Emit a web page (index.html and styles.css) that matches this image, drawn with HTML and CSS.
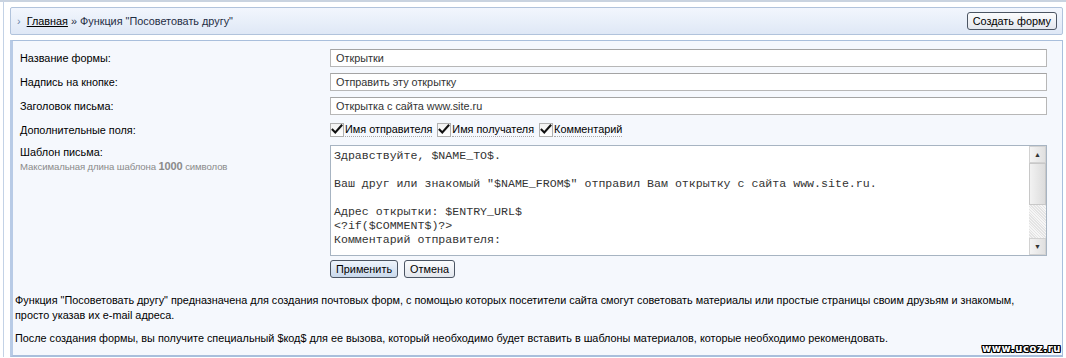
FILE: index.html
```html
<!DOCTYPE html>
<html lang="ru">
<head>
    <meta charset="UTF-8">
    <title>Посоветовать другу</title>
    <link rel="stylesheet" href="styles.css">
</head>
<body>
    <div class="page">
        <div class="crumbs">
            <div class="path">
                <span class="arrow">›</span>
                <a href="#">Главная</a> » Функция "Посоветовать другу"
            </div>
            <button class="btn">Создать форму</button>
        </div>

        <div class="panel">
            <div class="form">
                <div class="label">Название формы:</div>
                <div class="field"><input type="text" value="Открытки"></div>

                <div class="label">Надпись на кнопке:</div>
                <div class="field"><input type="text" value="Отправить эту открытку"></div>

                <div class="label">Заголовок письма:</div>
                <div class="field"><input type="text" value="Открытка с сайта www.site.ru"></div>

                <div class="label">Дополнительные поля:</div>
                <div class="field checks">
                    <label class="check"><span class="box"><svg width="14" height="12" viewBox="0 0 14 12"><path d="M1 6 L5 10 L13 1" fill="none" stroke="#111" stroke-width="2.4"/></svg></span><span class="text">Имя отправителя</span></label>
                    <label class="check"><span class="box"><svg width="14" height="12" viewBox="0 0 14 12"><path d="M1 6 L5 10 L13 1" fill="none" stroke="#111" stroke-width="2.4"/></svg></span><span class="text">Имя получателя</span></label>
                    <label class="check"><span class="box"><svg width="14" height="12" viewBox="0 0 14 12"><path d="M1 6 L5 10 L13 1" fill="none" stroke="#111" stroke-width="2.4"/></svg></span><span class="text">Комментарий</span></label>
                </div>

                <div class="label top">
                    Шаблон письма:
                    <div class="hint">Максимальная длина шаблона <b>1000</b> символов</div>
                </div>
                <div class="field">
                    <div class="memo">
                        <textarea>Здравствуйте, $NAME_TO$.

Ваш друг или знакомый "$NAME_FROM$" отправил Вам открытку с сайта www.site.ru.

Адрес открытки: $ENTRY_URL$
&lt;?if($COMMENT$)?&gt;
Комментарий отправителя:</textarea>
                        <div class="scroll">
                            <div class="sbtn">▲</div>
                            <div class="thumb"></div>
                            <div class="track"></div>
                            <div class="sbtn">▼</div>
                        </div>
                    </div>
                    <div class="actions">
                        <button class="btn primary">Применить</button>
                        <button class="btn">Отмена</button>
                    </div>
                </div>
            </div>

            <div class="about">
                <p>Функция "Посоветовать другу" предназначена для создания почтовых форм, с помощью которых посетители сайта смогут советовать материалы или простые страницы своим друзьям и знакомым, просто указав их e-mail адреса.</p>
                <p>После создания формы, вы получите специальный $код$ для ее вызова, который необходимо будет вставить в шаблоны материалов, которые необходимо рекомендовать.</p>
            </div>

            <div class="mark">www.ucoz.ru</div>
        </div>
    </div>
</body>
</html>
```

FILE: styles.css
```css
* {
    margin: 0;
    padding: 0;
    box-sizing: border-box;
}

body {
    background-color: #ffffff;
    font-family: 'Liberation Sans', Arial, sans-serif;
    font-size: 10.85px;
    color: #000;
    border-top: 2px solid #c9d3e0;
    padding-left: 3px;
}

.page {
    border-left: 1px solid #c3d2e6;
    padding: 5px 3px 0 6px;
}

.crumbs {
    height: 28px;
    display: flex;
    align-items: center;
    justify-content: space-between;
    padding: 0 5px 0 6px;
    border: 1px solid #b1c3dc;
    border-radius: 2px;
    background: linear-gradient(#f2f6fd, #dfe8f6);
}

.path {
    color: #1f2d44;
}

.arrow {
    color: #6b84a8;
    margin-right: 3px;
}

.path a {
    color: #000;
    text-decoration: underline;
}

.panel {
    position: relative;
    margin-top: 5px;
    height: 317px;
    border: 1px solid #a9bfdc;
    border-left: 3px solid #b8cbe6;
    border-bottom: 2px solid #a9bfdc;
    background-color: #f5f8fd;
    padding: 8px 15px 0 4px;
}

.form {
    display: grid;
    grid-template-columns: 313px 1fr;
    row-gap: 6px;
}

.label {
    padding-left: 3px;
    padding-top: 2px;
    line-height: 14px;
}

.label.top {
    padding-top: 0;
}

.hint {
    color: #8a8a8a;
    font-size: 9.6px;
    letter-spacing: -0.1px;
}

.hint b {
    font-size: 11px;
}

input[type="text"] {
    width: 100%;
    height: 18px;
    border: 1px solid #b7b7b7;
    border-top-color: #a4a4a4;
    background: #fff;
    padding: 0 5px;
    font-family: 'Liberation Sans', Arial, sans-serif;
    font-size: 10.85px;
    color: #333;
}

.checks {
    display: flex;
    gap: 5px;
    height: 18px;
    align-items: center;
}

.check {
    display: flex;
    align-items: center;
    gap: 1px;
}

.box {
    width: 14px;
    height: 14px;
    border: 1px solid #b0b0b0;
    background: linear-gradient(#f2f2f2, #ffffff);
    display: flex;
    align-items: center;
    justify-content: center;
    overflow: visible;
}

.box svg {
    margin-top: -2px;
}

.check .text {
    border-bottom: 1px dotted #aaa;
    line-height: 13px;
    color: #000;
}

.memo {
    display: flex;
    height: 111px;
    border: 1px solid #a7b4c2;
    background: #fff;
}

.memo textarea {
    flex: 1;
    border: none;
    resize: none;
    overflow: hidden;
    padding: 3px 3px;
    font-family: 'Liberation Mono', 'Courier New', monospace;
    font-size: 11.6px;
    line-height: 14px;
    color: #333;
    outline: none;
}

.scroll {
    width: 17px;
    display: flex;
    flex-direction: column;
    background: #eee;
}

.sbtn {
    height: 17px;
    font-size: 7px;
    color: #333;
    display: flex;
    align-items: center;
    justify-content: center;
    background: linear-gradient(90deg, #f4f4f4, #e0e0e0);
    border: 1px solid #d2d2d2;
}

.thumb {
    height: 42px;
    background: linear-gradient(90deg, #f2f2f2, #dcdcdc);
    border: 1px solid #c8c8c8;
}

.track {
    flex: 1;
    background: repeating-linear-gradient(45deg, #e4e4e4 0 1px, #f6f6f6 1px 2px);
}

.actions {
    display: flex;
    gap: 6px;
    margin-top: 4px;
}

.btn {
    height: 18px;
    padding: 0 5px;
    border: 1px solid #4b5563;
    border-radius: 3px;
    background: linear-gradient(#fbfcfd, #e3e7ee);
    font-family: 'Liberation Sans', Arial, sans-serif;
    font-size: 10.85px;
    color: #000;
}

.btn.primary {
    background: linear-gradient(#eef4fb, #c9d9ec);
}

.about {
    margin-top: 15px;
    margin-left: -2px;
    max-width: 1010px;
    line-height: 15px;
}

.about p {
    margin-bottom: 8px;
}

.mark {
    position: absolute;
    right: 1px;
    bottom: 1px;
    font-family: 'DejaVu Sans', sans-serif;
    font-weight: bold;
    font-size: 10px;
    line-height: 11px;
    letter-spacing: 0.6px;
    color: #fff;
    text-shadow: 1px 0 #000, -1px 0 #000, 0 1px #000, 0 -1px #000, 1px 1px #000, -1px -1px #000, 1px -1px #000, -1px 1px #000;
}
```
